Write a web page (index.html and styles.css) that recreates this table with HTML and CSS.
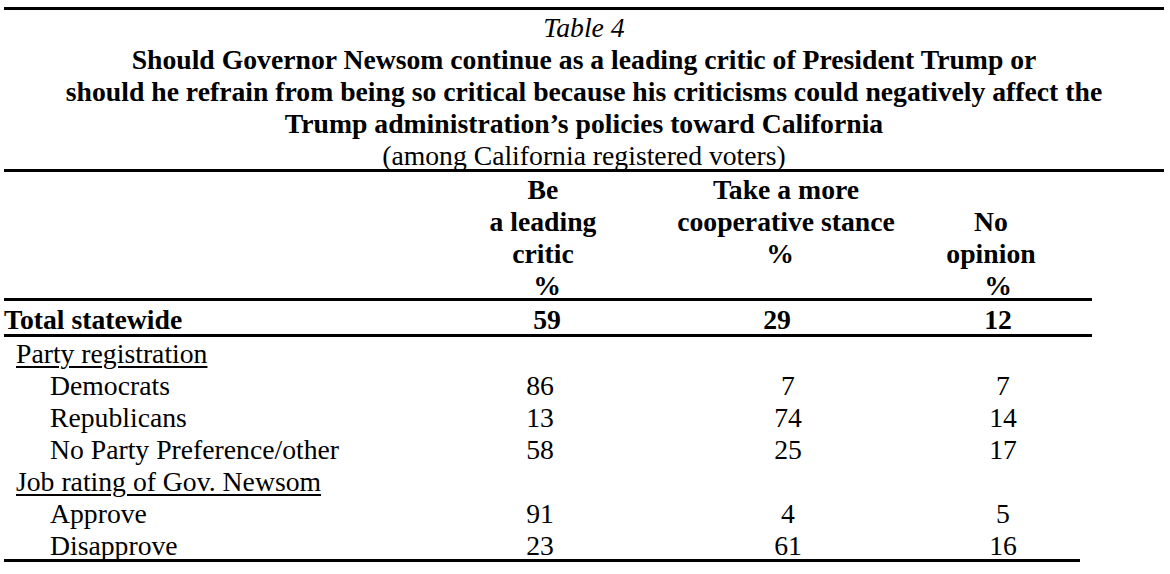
FILE: index.html
```html
<!DOCTYPE html>
<html lang="en">
<head>
<meta charset="utf-8">
<title>Table 4</title>
<link rel="stylesheet" href="styles.css">
</head>
<body>
<div class="report">
  <div class="caption">
    <div class="table-no">Table 4</div>
    <div class="title">Should Governor Newsom continue as a leading critic of President Trump or<br>should he refrain from being so critical because his criticisms could negatively affect the<br>Trump administration’s policies toward California</div>
    <div class="subtitle">(among California registered voters)</div>
  </div>

  <div class="row head">
    <div class="label"></div>
    <div class="num c1">Be<br>a leading<br>critic<br><span class="pct1">%</span></div>
    <div class="num c2">Take a more<br>cooperative stance<br><span class="pct2">%</span></div>
    <div class="num c3 lower">No<br>opinion<br><span class="pct3">%</span></div>
  </div>

  <div class="row total">
    <div class="label">Total statewide</div>
    <div class="num c1">59</div>
    <div class="num c2">29</div>
    <div class="num c3">12</div>
  </div>

  <div class="body">
    <div class="row">
      <div class="label group">Party registration</div>
    </div>
    <div class="row">
      <div class="label item">Democrats</div>
      <div class="num c1">86</div>
      <div class="num c2">7</div>
      <div class="num c3">7</div>
    </div>
    <div class="row">
      <div class="label item">Republicans</div>
      <div class="num c1">13</div>
      <div class="num c2">74</div>
      <div class="num c3">14</div>
    </div>
    <div class="row">
      <div class="label item">No Party Preference/other</div>
      <div class="num c1">58</div>
      <div class="num c2">25</div>
      <div class="num c3">17</div>
    </div>
    <div class="row">
      <div class="label group">Job rating of Gov. Newsom</div>
    </div>
    <div class="row">
      <div class="label item">Approve</div>
      <div class="num c1">91</div>
      <div class="num c2">4</div>
      <div class="num c3">5</div>
    </div>
    <div class="row">
      <div class="label item">Disapprove</div>
      <div class="num c1">23</div>
      <div class="num c2">61</div>
      <div class="num c3">16</div>
    </div>
  </div>
</div>
</body>
</html>
```

FILE: styles.css
```css
html, body {
  margin: 0;
  padding: 0;
  background: #ffffff;
}

body {
  font-family: "Liberation Serif", "Times New Roman", serif;
  font-size: 27.7px;
  line-height: 32px;
  color: #000000;
}

.report {
  padding: 7px 0 0 4px;
  width: 1160px;
}

.caption {
  box-sizing: border-box;
  height: 165px;
  padding-top: 2px;
  border-top: 3px solid #000;
  border-bottom: 3px solid #000;
  text-align: center;
}

.subtitle {
  height: 29px;
}

.table-no {
  font-style: italic;
}

.title {
  font-weight: bold;
}

.row {
  box-sizing: border-box;
  display: grid;
  grid-template-columns: 424px 230px 256px 154px 1fr;
  align-items: start;
  width: 1088px;
  height: 32px;
  padding-top: 1px;
}

.row > div {
  height: 30px;
}

.head {
  height: 129px;
  padding-top: 2px;
  font-weight: bold;
  border-bottom: 3px solid #000;
}

.head > div {
  height: auto;
}

.lower {
  padding-top: 32px;
}

.pct1 { padding-left: 8px; }
.pct2 { padding-right: 12px; }
.pct3 { padding-left: 14px; }

.total {
  height: 36px;
  padding-top: 3px;
  font-weight: bold;
  border-bottom: 3px solid #000;
}

.body {
  box-sizing: border-box;
  width: 1076px;
  height: 225px;
  border-bottom: 3px solid #000;
}

.body .row {
  width: 1076px;
}

.num {
  text-align: center;
  white-space: nowrap;
}

.group {
  padding-left: 12px;
  text-decoration: underline;
  text-decoration-thickness: 2px;
  text-underline-offset: 3px;
  white-space: nowrap;
}

.item {
  padding-left: 46px;
}

/* small per-row centring adjustments of the number columns */
.total .c1 { padding-left: 8px; }
.total .c2 { padding-right: 18px; }
.total .c3 { padding-left: 14px; }

.body .c1 { padding-right: 6px; }
.body .c2 { padding-left: 4px; }
.body .c3 { padding-left: 24px; }
```
